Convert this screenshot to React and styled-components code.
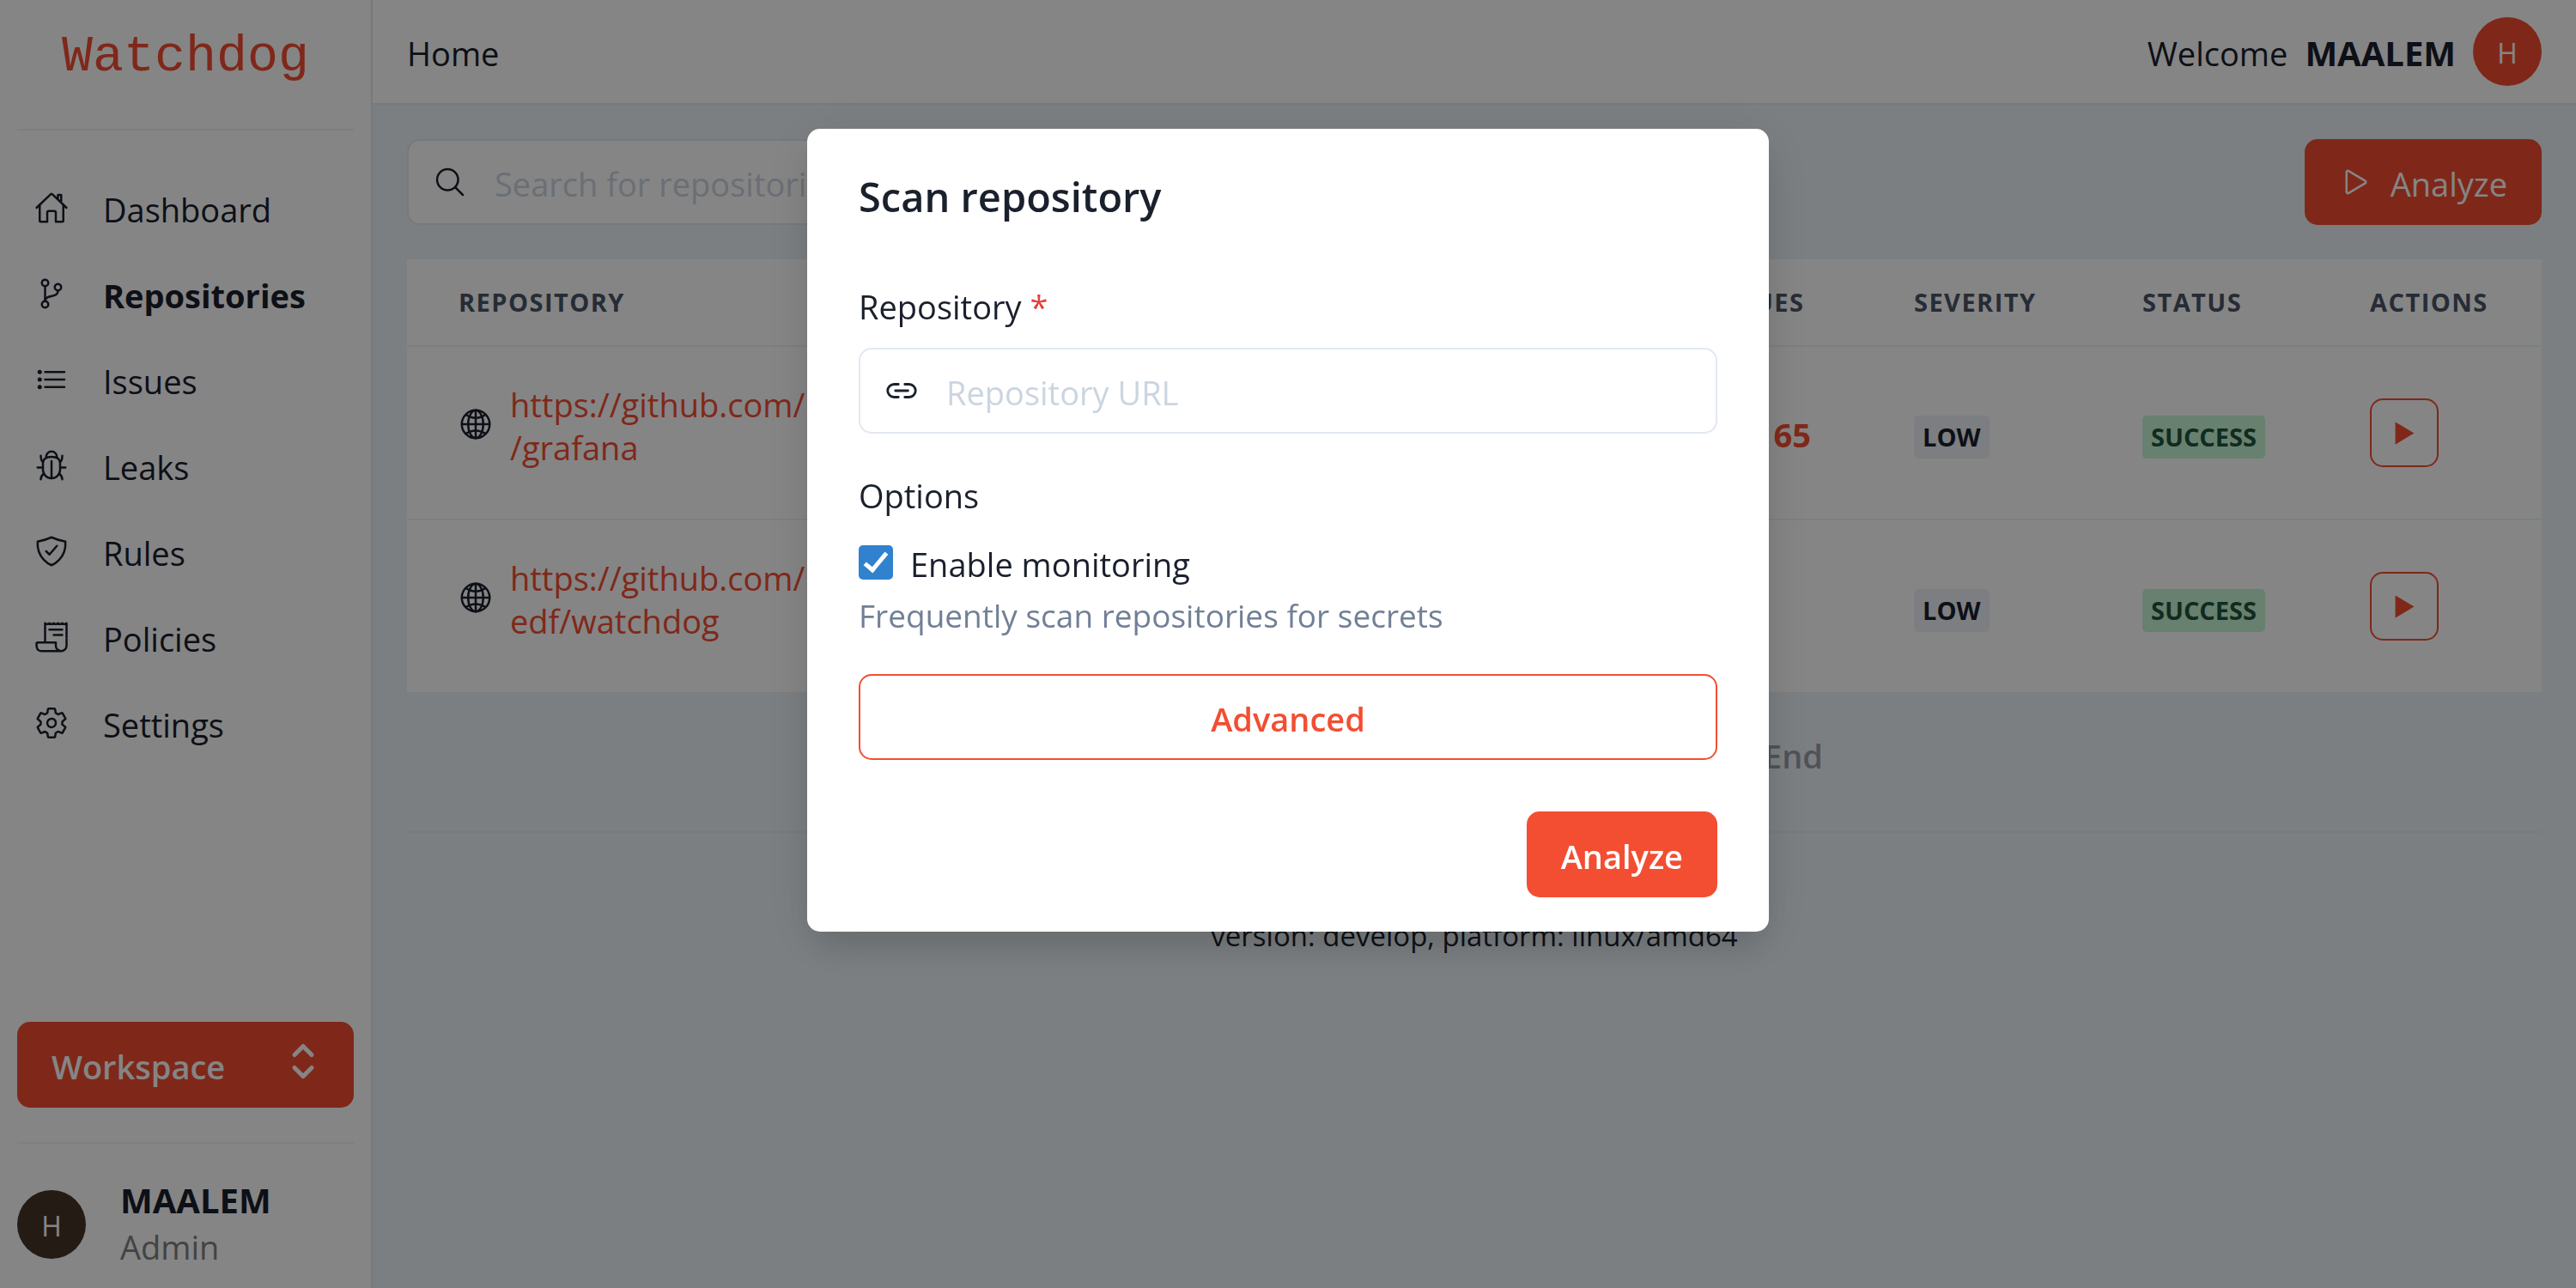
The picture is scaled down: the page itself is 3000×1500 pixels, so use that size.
import React from "react";
import styled, { createGlobalStyle } from "styled-components";
import {
  IoHomeOutline,
  IoGitBranchOutline,
  IoListOutline,
  IoBugOutline,
  IoShieldCheckmarkOutline,
  IoReceiptOutline,
  IoSettingsOutline,
  IoSearchOutline,
  IoLinkOutline,
  IoGlobeOutline,
  IoPlayOutline,
  IoPlaySharp,
} from "react-icons/io5";
import { HiOutlineSelector } from "react-icons/hi";

const color = {
  brand: "#f34e32",
  ink: "#1a202c",
  muted: "#718096",
  heading: "#4a5568",
  line: "#e2e8f0",
  canvas: "#ecf3f7",
  subtle: "#edf2f7",
  placeholder: "#cbd5e0",
};

const GlobalStyle = createGlobalStyle`
  *, *::before, *::after { box-sizing: border-box; }
  body {
    margin: 0;
    background: ${color.canvas};
    color: ${color.ink};
    font-family: "Open Sans", "Noto Sans", sans-serif;
    font-size: 38px;
    line-height: 60px;
  }
  button, input { font: inherit; color: inherit; }
  h1, h2, p { margin: 0; }
  svg { display: block; flex-shrink: 0; }
`;

const Shell = styled.div`
  display: flex;
  min-height: 100vh;
`;

const Sidebar = styled.aside`
  display: flex;
  flex-direction: column;
  width: 434px;
  flex-shrink: 0;
  padding: 0 20px 18px;
  background: #fff;
  border-right: 2px solid ${color.line};
`;

const Brand = styled.a`
  height: 150px;
  padding-top: 30px;
  text-align: center;
  text-decoration: none;
  color: ${color.brand};
  font-family: "Liberation Mono", monospace;
  font-size: 60px;
  line-height: 72px;
`;

const Divider = styled.hr`
  width: 100%;
  margin: 0;
  border: 0;
  border-top: 2px solid ${color.line};
  opacity: 0.6;
`;

const Menu = styled.nav`
  display: flex;
  flex-direction: column;
  flex: 1;
  padding: 40px 20px;
`;

const MenuLink = styled.a`
  display: flex;
  align-items: center;
  gap: 40px;
  height: 100px;
  color: inherit;
  text-decoration: none;
  font-weight: ${(p) => (p.$active ? 700 : 400)};
`;

/* Text beside an icon or inside a button, dropped to sit on the optical centre. */
const Caption = styled.span`
  display: block;
  padding-top: 4px;
`;

const Button = styled.button`
  display: inline-flex;
  align-items: center;
  justify-content: center;
  gap: 20px;
  height: 100px;
  padding: 0 40px;
  border: 0;
  border-radius: 15px;
  background: ${color.brand};
  color: #fff;
  font-weight: ${(p) => p.$weight || 600};
  cursor: pointer;
`;

const OutlineButton = styled(Button)`
  width: 100%;
  border: 2px solid ${color.brand};
  background: transparent;
  color: ${color.brand};
`;

const IconButton = styled(OutlineButton)`
  display: flex;
  width: 80px;
  height: 80px;
  padding: 0;
`;

const PageButton = styled(Button)`
  background: transparent;
  color: ${color.ink};
  &:disabled { opacity: 0.4; cursor: default; }
`;

const WorkspaceButton = styled(Button)`
  justify-content: space-between;
  margin-bottom: 40px;
  padding: 0 29px 0 40px;
  svg { margin-bottom: 8px; }
`;

const Profile = styled.div`
  display: flex;
  align-items: center;
  gap: 40px;
  padding-top: 38px;
`;

const Avatar = styled.span`
  display: flex;
  align-items: center;
  justify-content: center;
  width: 80px;
  height: 80px;
  border-radius: 50%;
  background: ${(p) => p.$bg};
  color: #fff;
  font-size: 32px;
`;

const UserName = styled.strong`
  display: block;
  padding-top: 4px;
  font-size: 40px;
  font-weight: 700;
  line-height: ${(p) => p.$leading || "60px"};
`;

const ProfileRole = styled.p`
  color: #808080;
`;

const Main = styled.main`
  display: flex;
  flex-direction: column;
  flex: 1;
  min-width: 0;
`;

const TopBar = styled.header`
  display: flex;
  align-items: center;
  justify-content: space-between;
  height: 122px;
  padding: 0 40px;
  background: #fff;
  border-bottom: 2px solid ${color.line};
`;

const Greeting = styled.div`
  display: flex;
  align-items: center;
  gap: 20px;
`;

const Content = styled.section`
  display: flex;
  flex-direction: column;
  gap: 40px;
  padding: 40px 40px 0;
`;

const Toolbar = styled.div`
  display: flex;
  align-items: center;
  justify-content: space-between;
`;

const Field = styled.label`
  display: flex;
  align-items: center;
  width: 100%;
  max-width: ${(p) => p.$max || "none"};
  height: 100px;
  padding: 0 28px;
  gap: 32px;
  border: 2px solid ${color.line};
  border-radius: 15px;
  background: #fff;
`;

const TextInput = styled.input`
  flex: 1;
  min-width: 0;
  padding: 4px 0 0;
  border: 0;
  outline: 0;
  background: transparent;
  &::placeholder { color: ${color.placeholder}; opacity: 1; }
`;

const Table = styled.table`
  width: 100%;
  table-layout: fixed;
  border-collapse: separate;
  border-spacing: 0;
  background: #fff;
`;

const Col = styled.col`
  width: ${(p) => p.$w || "auto"};
`;

const Th = styled.th`
  height: 102px;
  padding: 0 60px;
  border-bottom: 2px solid ${color.canvas};
  text-align: left;
  color: ${color.heading};
  font-size: 29px;
  font-weight: 700;
  line-height: 40px;
  letter-spacing: 0.05em;
  text-transform: uppercase;
`;

const Td = styled.td`
  height: 202px;
  padding: 0 60px;
  border-bottom: 2px solid ${color.canvas};
  vertical-align: middle;
`;

const RepoLink = styled.a`
  display: flex;
  align-items: center;
  gap: 20px;
  margin-bottom: 20px;
  color: ${color.brand};
  text-decoration: none;
  line-height: 50px;
  svg { color: ${color.ink}; }
`;

const Count = styled.a`
  display: block;
  padding-top: 4px;
  text-align: right;
  color: ${color.brand};
  font-weight: 700;
  text-decoration: none;
`;

const Badge = styled.span`
  display: inline-block;
  padding: 0 10px;
  border-radius: 5px;
  background: ${(p) => (p.$success ? "#c6f6d5" : color.subtle)};
  color: ${(p) => (p.$success ? "#22543d" : color.ink)};
  font-size: 29px;
  font-weight: 700;
  line-height: 50px;
  vertical-align: middle;
`;

const Pager = styled.nav`
  display: flex;
  justify-content: space-between;
  align-self: center;
  width: 892px;
  margin-top: -20px;
`;

const Footer = styled.footer`
  padding-top: 90px;
  text-align: center;
  font-size: 33px;
`;

const Overlay = styled.div`
  position: fixed;
  inset: 0;
  display: flex;
  align-items: flex-start;
  justify-content: center;
  padding-top: 150px;
  background: rgba(0, 0, 0, 0.48);
`;

const Modal = styled.form`
  width: 1120px;
  border-radius: 15px;
  background: #fff;
  box-shadow: 0 25px 38px -8px rgba(0, 0, 0, 0.1), 0 10px 60px rgba(0, 0, 0, 0.1);
`;

const ModalTitle = styled.h2`
  padding: 42px 60px 38px;
  font-size: 47px;
  font-weight: 600;
  line-height: 75px;
`;

const ModalBody = styled.div`
  padding: 20px 60px;
`;

const Label = styled.label`
  display: block;
  padding: 2px 0 18px;
`;

const Required = styled.span`
  color: #e53e3e;
`;

const Options = styled.fieldset`
  margin: 40px 0;
  padding: 0;
  border: 0;
  legend { padding: 2px 0 18px; }
`;

const CheckLabel = styled.label`
  display: flex;
  align-items: center;
  gap: 20px;
  height: 60px;
`;

const Checkbox = styled.input`
  appearance: none;
  display: grid;
  place-items: center;
  width: 40px;
  height: 40px;
  margin: 0;
  border-radius: 5px;
  background: #3182ce;
  &::after {
    content: "";
    width: 14px;
    height: 28px;
    margin-bottom: 6px;
    border: solid #fff;
    border-width: 0 5px 5px 0;
    transform: rotate(40deg);
  }
`;

const Hint = styled.p`
  padding-top: 4px;
  color: ${color.muted};
  font-size: 37px;
  line-height: 56px;
`;

const ModalFooter = styled.div`
  display: flex;
  justify-content: flex-end;
  padding: 40px 60px;
`;

const menu = [
  ["Dashboard", IoHomeOutline],
  ["Repositories", IoGitBranchOutline],
  ["Issues", IoListOutline],
  ["Leaks", IoBugOutline],
  ["Rules", IoShieldCheckmarkOutline],
  ["Policies", IoReceiptOutline],
  ["Settings", IoSettingsOutline],
];

const repositories = [
  { head: "https://github.com/", tail: "/grafana", issues: "65" },
  { head: "https://github.com/", tail: "edf/watchdog", issues: "" },
];

export default function App() {
  return (
    <>
      <GlobalStyle />
      <Shell>
        <Sidebar>
          <Brand href="#">Watchdog</Brand>
          <Divider />
          <Menu>
            {menu.map(([name, Icon]) => (
              <MenuLink key={name} href="#" $active={name === "Repositories"}>
                <Icon size={40} />
                <Caption>{name}</Caption>
              </MenuLink>
            ))}
          </Menu>
          <WorkspaceButton type="button">
            <Caption>Workspace</Caption>
            <HiOutlineSelector size={60} />
          </WorkspaceButton>
          <Divider />
          <Profile>
            <Avatar $bg="#453428">
              <Caption>H</Caption>
            </Avatar>
            <div>
              <UserName $leading="48px">MAALEM</UserName>
              <ProfileRole>Admin</ProfileRole>
            </div>
          </Profile>
        </Sidebar>
        <Main>
          <TopBar>
            <Caption>Home</Caption>
            <Greeting>
              <Caption>Welcome</Caption>
              <UserName>MAALEM</UserName>
              <Avatar $bg={color.brand}>
                <Caption>H</Caption>
              </Avatar>
            </Greeting>
          </TopBar>
          <Content>
            <Toolbar>
              <Field $max="1200px">
                <IoSearchOutline size={40} />
                <TextInput type="search" aria-label="Search" placeholder="Search for repositories" />
              </Field>
              <Button type="button" $weight={400}>
                <IoPlayOutline size={40} />
                <Caption>Analyze</Caption>
              </Button>
            </Toolbar>
            <Table>
              <colgroup>
                <Col />
                <Col $w="232px" />
                <Col $w="266px" />
                <Col $w="265px" />
                <Col $w="260px" />
              </colgroup>
              <thead>
                <tr>
                  <Th>Repository</Th>
                  <Th>Issues</Th>
                  <Th>Severity</Th>
                  <Th>Status</Th>
                  <Th>Actions</Th>
                </tr>
              </thead>
              <tbody>
                {repositories.map((repo) => (
                  <tr key={repo.tail}>
                    <Td>
                      <RepoLink href="#">
                        <IoGlobeOutline size={40} />
                        <Caption>
                          {repo.head}
                          <br />
                          {repo.tail}
                        </Caption>
                      </RepoLink>
                    </Td>
                    <Td>
                      <Count href="#">{repo.issues}</Count>
                    </Td>
                    <Td>
                      <Badge>LOW</Badge>
                    </Td>
                    <Td>
                      <Badge $success>SUCCESS</Badge>
                    </Td>
                    <Td>
                      <IconButton type="button" aria-label="Analyze repository">
                        <IoPlaySharp size={35} />
                      </IconButton>
                    </Td>
                  </tr>
                ))}
              </tbody>
            </Table>
            <Pager>
              <PageButton type="button" disabled>
                <Caption>Start</Caption>
              </PageButton>
              <PageButton type="button" disabled>
                <Caption>End</Caption>
              </PageButton>
            </Pager>
          </Content>
          <Content>
            <Divider />
          </Content>
          <Footer>version: develop, platform: linux/amd64</Footer>
        </Main>
      </Shell>
      <Overlay>
        <Modal role="dialog" aria-labelledby="scan-title">
          <ModalTitle id="scan-title">Scan repository</ModalTitle>
          <ModalBody>
            <Label htmlFor="repository">
              Repository <Required>*</Required>
            </Label>
            <Field as="div">
              <IoLinkOutline size={40} />
              <TextInput id="repository" type="url" placeholder="Repository URL" />
            </Field>
            <Options>
              <legend>Options</legend>
              <CheckLabel>
                <Checkbox type="checkbox" defaultChecked />
                <Caption>Enable monitoring</Caption>
              </CheckLabel>
              <Hint>Frequently scan repositories for secrets</Hint>
            </Options>
            <OutlineButton type="button">
              <Caption>Advanced</Caption>
            </OutlineButton>
          </ModalBody>
          <ModalFooter>
            <Button type="button">
              <Caption>Analyze</Caption>
            </Button>
          </ModalFooter>
        </Modal>
      </Overlay>
    </>
  );
}
